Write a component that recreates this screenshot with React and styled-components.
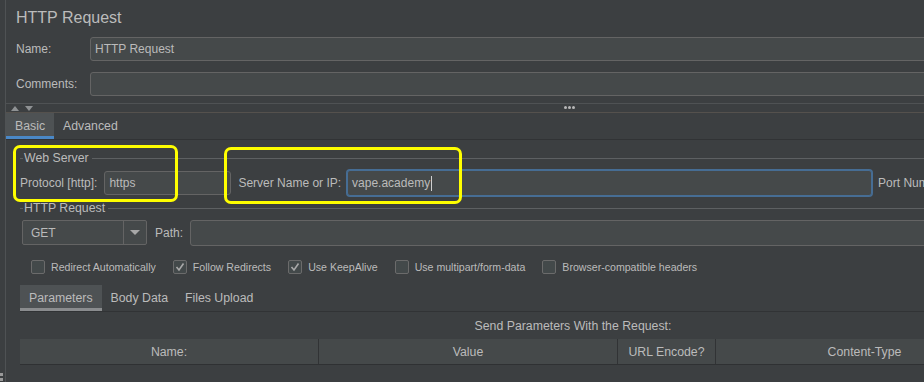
import React from "react";
import styled, { createGlobalStyle } from "styled-components";

const Global = createGlobalStyle`
  html, body { margin: 0; padding: 0; background: #3c3f41; }
  body { font-family: "Liberation Sans", Arial, sans-serif; }
  * { box-sizing: border-box; }
`;

const Frame = styled.div`
  position: relative;
  width: 924px;
  height: 382px;
  overflow: hidden;
  display: flex;
  background: #3c3f41;
  color: #bbbbbb;
  font-size: 12px;
`;

const Gutter = styled.div`
  position: relative;
  flex: 0 0 6px;
  border-right: 1px solid #4f5254;
`;

const Grip = styled.div`
  position: absolute;
  left: 0;
  width: 3px;
  height: 3px;
  background: #9a9a9a;
  top: ${(p) => p.$top}px;
`;

const Main = styled.div`
  flex: 0 0 1128px;
  display: flex;
  flex-direction: column;
`;

const Title = styled.div`
  height: 37px;
  line-height: 36px;
  padding-left: 10px;
  font-size: 16px;
  color: #bbbbbb;
`;

const FieldRow = styled.div`
  display: flex;
  align-items: center;
  padding-left: 10px;
  margin-top: ${(p) => p.$mt || 0}px;
`;

const FieldLabel = styled.span`
  flex: 0 0 ${(p) => p.$w}px;
  white-space: nowrap;
`;

const TextBox = styled.div`
  flex: ${(p) => (p.$w ? `0 0 ${p.$w}px` : "1")};
  height: ${(p) => p.$h || 24}px;
  background: #45494a;
  border: 1px solid ${(p) => (p.$focus ? "#466d94" : "#646464")};
  box-shadow: ${(p) => (p.$focus ? "0 0 0 1px #466d94" : "none")};
  border-radius: 3px;
  display: flex;
  align-items: center;
  padding-left: 4px;
  color: #bbbbbb;
  white-space: nowrap;
  margin-left: ${(p) => p.$ml || 0}px;
`;

const Caret = styled.span`
  display: inline-block;
  width: 1px;
  height: 15px;
  background: #cfcfcf;
  margin-left: 1px;
`;

const Splitter = styled.div`
  margin-top: 7px;
  height: 10px;
  border-top: 1px solid #4f5254;
  border-bottom: 1px solid #55514d;
  position: relative;
  display: flex;
  align-items: center;
  padding-left: 5px;
  gap: 6px;
`;

const Arrow = styled.span`
  width: 0;
  height: 0;
  border-left: 4px solid transparent;
  border-right: 4px solid transparent;
  ${(p) =>
    p.$up
      ? "border-bottom: 5px solid #8f9294;"
      : "border-top: 5px solid #8f9294;"}
`;

const Dots = styled.div`
  position: absolute;
  left: 558px;
  top: 2px;
  display: flex;
  gap: 1px;
`;

const Dot = styled.span`
  width: 3px;
  height: 3px;
  border-radius: 50%;
  background: #b8b8b8;
`;

const TabBar = styled.div`
  display: flex;
  height: 27px;
  border-bottom: 1px solid #313335;
  margin-left: ${(p) => p.$ml || 0}px;
  margin-top: ${(p) => p.$mt || 0}px;
`;

const Tab = styled.div`
  height: 26px;
  padding: 0 ${(p) => p.$px || 9}px;
  display: flex;
  align-items: center;
  background: ${(p) => (p.$active ? "#4e5254" : "transparent")};
  border-bottom: 3px solid
    ${(p) => (p.$active ? p.$accent : "transparent")};
  padding-top: 3px;
  font-size: 12.3px;
  color: #bbbbbb;
`;

const Panel = styled.div`
  display: flex;
  flex-direction: column;
  padding-left: 14px;
  padding-right: 8px;
`;

const GroupTitle = styled.div`
  display: flex;
  align-items: center;
  height: 12px;
  margin-top: ${(p) => p.$mt}px;
  &::before {
    content: "";
    width: 3px;
    border-top: 1px solid #5d6062;
    margin-right: 1px;
  }
  &::after {
    content: "";
    flex: 1;
    border-top: 1px solid #5d6062;
    margin-left: 3px;
  }
`;

const GroupText = styled.span`
  font-size: 12.3px;
  white-space: nowrap;
`;

const Row = styled.div`
  display: flex;
  align-items: center;
  margin-top: ${(p) => p.$mt || 0}px;
  gap: ${(p) => p.$gap || 0}px;
  padding-left: ${(p) => p.$pl || 0}px;
  height: ${(p) => p.$h}px;
`;

const Label = styled.span`
  white-space: nowrap;
  margin-left: ${(p) => p.$ml || 0}px;
`;

const Combo = styled.div`
  flex: 0 0 125px;
  height: 25px;
  margin-left: 2px;
  display: flex;
  background: #45494a;
  border: 1px solid #646464;
  border-radius: 2px;
`;

const ComboValue = styled.div`
  flex: 1;
  display: flex;
  align-items: center;
  padding-left: 8px;
  border-right: 1px solid #646464;
`;

const ComboButton = styled.div`
  flex: 0 0 22px;
  display: flex;
  align-items: center;
  justify-content: center;
`;

const DownTri = styled.span`
  width: 0;
  height: 0;
  border-left: 5px solid transparent;
  border-right: 5px solid transparent;
  border-top: 5px solid #a7a7a7;
`;

const CheckItem = styled.label`
  display: flex;
  align-items: center;
  gap: 6px;
  font-size: 10.6px;
  white-space: nowrap;
`;

const Box = styled.span`
  width: 14px;
  height: 14px;
  border: 1px solid #6b6b6b;
  border-radius: 2px;
  background: #43494a;
  display: flex;
  align-items: center;
  justify-content: center;
`;

const Caption = styled.div`
  height: 27px;
  display: flex;
  align-items: center;
  justify-content: center;
  font-size: 12.3px;
`;

const Header = styled.div`
  display: grid;
  grid-template-columns: 298px 299px 98px 298px 1fr;
  height: 26px;
  background: #45494a;
  border-bottom: 1px solid #2f3133;
`;

const HeadCell = styled.div`
  display: flex;
  align-items: center;
  justify-content: center;
  font-size: 12.3px;
  border-left: ${(p) => (p.$first ? "none" : "1px solid #313335")};
`;

const Annotation = styled.div`
  position: absolute;
  border: 3px solid #ffff00;
  border-radius: 7px;
  pointer-events: none;
`;

function Check({ checked, children }) {
  return (
    <CheckItem>
      <Box>
        {checked && (
          <svg width="10" height="10" viewBox="0 0 10 10">
            <polyline
              points="1.5,5 4,8 8.5,1.5"
              fill="none"
              stroke="#a9a9a9"
              strokeWidth="1.6"
            />
          </svg>
        )}
      </Box>
      {children}
    </CheckItem>
  );
}

export default function App() {
  return (
    <>
      <Global />
      <Frame>
        <Gutter>
          <Grip $top={373} />
          <Grip $top={378} />
        </Gutter>
        <Main>
          <Title>HTTP Request</Title>
          <FieldRow>
            <FieldLabel $w={74}>Name:</FieldLabel>
            <TextBox>HTTP Request</TextBox>
          </FieldRow>
          <FieldRow $mt={11}>
            <FieldLabel $w={74}>Comments:</FieldLabel>
            <TextBox />
          </FieldRow>
          <Splitter>
            <Arrow $up />
            <Arrow />
            <Dots>
              <Dot />
              <Dot />
              <Dot />
            </Dots>
          </Splitter>
          <TabBar>
            <Tab $active $accent="#4a88c7">Basic</Tab>
            <Tab>Advanced</Tab>
          </TabBar>
          <Panel>
            <GroupTitle $mt={12}>
              <GroupText>Web Server</GroupText>
            </GroupTitle>
            <Row $mt={6} $h={26}>
              <Label>Protocol [http]:</Label>
              <TextBox $w={127} $ml={7}>https</TextBox>
              <Label $ml={7}>Server Name or IP:</Label>
              <TextBox $w={525} $h={26} $ml={6} $focus>
                vape.academy
                <Caret />
              </TextBox>
              <Label $ml={6}>Port Number:</Label>
            </Row>
            <GroupTitle $mt={6}>
              <GroupText>HTTP Request</GroupText>
            </GroupTitle>
            <Row $mt={6} $h={25}>
              <Combo>
                <ComboValue>GET</ComboValue>
                <ComboButton>
                  <DownTri />
                </ComboButton>
              </Combo>
              <Label $ml={8}>Path:</Label>
              <TextBox $h={26} $ml={7} />
            </Row>
            <Row $mt={15} $h={14} $gap={17} $pl={11}>
              <Check>Redirect Automatically</Check>
              <Check checked>Follow Redirects</Check>
              <Check checked>Use KeepAlive</Check>
              <Check>Use multipart/form-data</Check>
              <Check>Browser-compatible headers</Check>
            </Row>
            <TabBar $mt={11}>
              <Tab $active $accent="#8a8c8e" $px={9}>
                Parameters
              </Tab>
              <Tab $px={9}>Body Data</Tab>
              <Tab $px={8}>Files Upload</Tab>
            </TabBar>
            <Caption>Send Parameters With the Request:</Caption>
            <Header>
              <HeadCell $first>Name:</HeadCell>
              <HeadCell>Value</HeadCell>
              <HeadCell>URL Encode?</HeadCell>
              <HeadCell>Content-Type</HeadCell>
              <HeadCell />
            </Header>
          </Panel>
        </Main>
        <Annotation style={{ left: 13, top: 145, width: 165, height: 57 }} />
        <Annotation style={{ left: 224, top: 147, width: 238, height: 57 }} />
      </Frame>
    </>
  );
}
